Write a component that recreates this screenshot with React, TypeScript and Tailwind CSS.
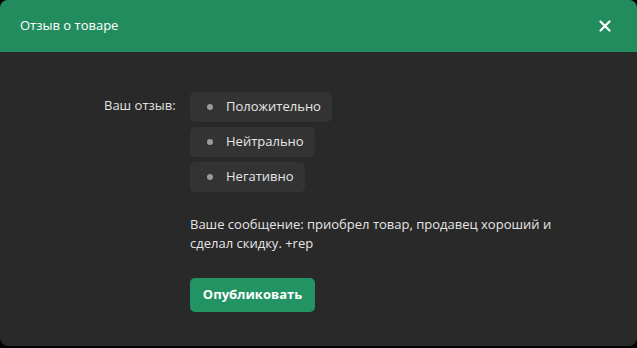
import React, { useState } from 'react';

const options = ['Положительно', 'Нейтрально', 'Негативно'];

export default function App() {
  const [selected, setSelected] = useState<number | null>(null);

  return (
    <div className="w-[637px] h-[348px] bg-black font-['Open_Sans',sans-serif]">
      <div className="h-[346px] rounded-lg overflow-hidden bg-[#292929] flex flex-col">
        <div className="h-[52px] bg-[#238c5f] flex items-center justify-between pl-5 pr-[26px] shrink-0">
          <span className="text-white text-[13px]">Отзыв о товаре</span>
          <button className="text-white">
            <svg width="12" height="12" viewBox="0 0 12 12">
              <path d="M1.5 1.5 L10.5 10.5 M10.5 1.5 L1.5 10.5" stroke="currentColor" strokeWidth="2.2" strokeLinecap="round" />
            </svg>
          </button>
        </div>

        <div className="flex pt-10 pl-[104px]">
          <div className="w-[86px] text-[13px] text-[#e2e2e2] pt-[4px]">Ваш отзыв:</div>
          <div className="flex flex-col">
            <div className="flex flex-col items-start gap-[5px]">
              {options.map((o, i) => (
                <button
                  key={o}
                  onClick={() => setSelected(i)}
                  className="h-[30px] flex items-center gap-[13px] pl-[17px] pr-[11px] rounded-[5px] bg-[#333333] text-[13px] text-[#e6e6e6]"
                >
                  <span className={`w-[6px] h-[6px] rounded-full ${selected === i ? 'bg-[#2fb57a]' : 'bg-[#9a9a9a]'}`} />
                  {o}
                </button>
              ))}
            </div>
            <p className="mt-[23px] w-[372px] text-[13px] leading-[19px] text-[#e6e6e6]">
              Ваше сообщение: приобрел товар, продавец хороший и сделал скидку. +rep
            </p>
            <button className="mt-[25px] w-[125px] h-[34px] rounded-[5px] bg-[#229463] text-white text-[13px] font-bold">
              Опубликовать
            </button>
          </div>
        </div>
      </div>
    </div>
  );
}
